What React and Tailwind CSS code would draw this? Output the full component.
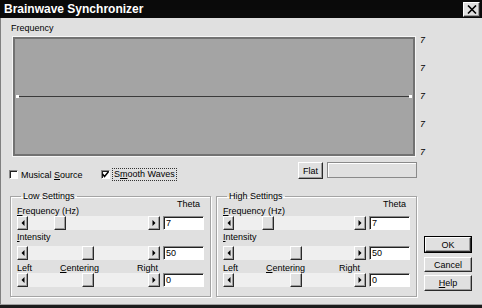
import React from "react";

const btn =
  "border border-t-[#ffffff] border-l-[#ffffff] border-r-[#2a2a2a] border-b-[#2a2a2a] shadow-[inset_-1px_-1px_0_#9c9c9c] bg-[#e0e0e0]";
const sunken =
  "border border-t-[#8a8a8a] border-l-[#8a8a8a] border-r-[#ffffff] border-b-[#ffffff] shadow-[inset_1px_1px_0_#222222]";

function LeftArrow() {
  return (
    <svg width="4" height="6" viewBox="0 0 4 6">
      <polygon points="3.5,0 0.5,3 3.5,6" fill="#000" />
    </svg>
  );
}
function RightArrow() {
  return (
    <svg width="4" height="6" viewBox="0 0 4 6">
      <polygon points="0.5,0 3.5,3 0.5,6" fill="#000" />
    </svg>
  );
}

function Slider({ spacer }) {
  return (
    <div className="flex h-[14px] w-[143px]">
      <div className={btn + " w-[11px] h-full flex items-center justify-center"}>
        <LeftArrow />
      </div>
      <div className="flex-1 flex bg-[#efefef]">
        <div className={spacer} />
        <div className={btn + " w-[12px] h-full shrink-0"} />
      </div>
      <div className={btn + " w-[12px] h-full flex items-center justify-center"}>
        <RightArrow />
      </div>
    </div>
  );
}

function Field({ value }) {
  return (
    <div className={sunken + " w-[41px] h-[14px] bg-white text-[9px] leading-[12px] pl-[2px] text-black"}>
      {value}
    </div>
  );
}

function Group({ title, values, spacers, rightLabelW }) {
  return (
    <fieldset className="w-[201px] border border-[#a4a4a4] shadow-[1px_1px_0_#ffffff,inset_1px_1px_0_#ffffff] px-[6px] pb-[9px]">
      <legend className="ml-[4px] px-[2px] text-[9px] leading-[10px]">{title}</legend>
      <div className="flex justify-between h-[17px] -mt-[2px] pr-[4px]">
        <span className="self-end leading-[10px]">
          <u>F</u>requency (Hz)
        </span>
        <span className="self-start leading-[10px]">Theta</span>
      </div>
      <div className="flex gap-[3px]">
        <Slider spacer={spacers[0]} />
        <Field value={values[0]} />
      </div>
      <div className="h-[16px] pt-[2px] leading-[10px]">
        <u>I</u>ntensity
      </div>
      <div className="flex gap-[3px]">
        <Slider spacer={spacers[1]} />
        <Field value={values[1]} />
      </div>
      <div className="h-[13px] pt-[3px] leading-[10px] flex">
        <span className="w-[43px]">Left</span>
        <span className={rightLabelW}>
          <u>C</u>entering
        </span>
        <span>Right</span>
      </div>
      <div className="flex gap-[3px]">
        <Slider spacer={spacers[1]} />
        <Field value={values[2]} />
      </div>
    </fieldset>
  );
}

export default function App() {
  return (
    <div
      className="w-[482px] h-[308px] bg-[#e0e0e0] flex flex-col text-[9px] text-black overflow-hidden shadow-[inset_1px_0_0_#808080]"
      style={{ fontFamily: '"Liberation Sans", Arial, sans-serif' }}
    >
      {/* Title bar */}
      <div className="h-[18px] bg-[#0a0a0a] flex items-center shrink-0">
        <span className="pl-[4px] text-white font-bold text-[12px] leading-[14px]">
          Brainwave Synchronizer
        </span>
        <div className={btn + " ml-auto mr-[2px] w-[17px] h-[15px] flex items-center justify-center"}>
          <svg width="10" height="9" viewBox="0 0 10 9">
            <path d="M1 0.5 L9 8.5 M9 0.5 L1 8.5" stroke="#000" strokeWidth="1.6" />
          </svg>
        </div>
      </div>

      {/* Frequency label */}
      <div className="h-[18px] pl-[11px] pt-[5px] leading-[10px] shrink-0">Frequency</div>

      {/* Graph row */}
      <div className="flex ml-[12px] shrink-0">
        <div className="w-[404px] h-[121px] border border-[#f6f6f6]">
          <div className="w-full h-full border-2 border-[#727272] bg-[#a4a4a4] flex items-center px-[1px]">
            <div className="flex items-center w-full">
              <div className="w-[3px] h-[3px] bg-white shrink-0" />
              <div className="flex-1 h-[1px] bg-[#3a3a3a]" />
              <div className="w-[3px] h-[3px] bg-white shrink-0" />
            </div>
          </div>
        </div>
        <div className="ml-[4px] -mt-[1px] h-[122px] flex flex-col justify-between leading-[10px] italic">
          <span>7</span>
          <span>7</span>
          <span>7</span>
          <span>7</span>
          <span>7</span>
        </div>
      </div>

      {/* Checkbox row */}
      <div className="flex items-start h-[17px] mt-[5px] pl-[9px] shrink-0">
        <div className="w-[92px] flex items-center h-[13px] mt-[6px]">
          <div className={sunken + " w-[9px] h-[9px] bg-white"} />
          <span className="ml-[3px] leading-[10px]">
            Musical <u>S</u>ource
          </span>
        </div>
        <div className="w-[197px] flex items-center h-[13px] mt-[6px]">
          <div className={sunken + " w-[9px] h-[9px] bg-white flex items-center justify-center"}>
            <svg width="7" height="7" viewBox="0 0 7 7">
              <path d="M0.5 3 L2.5 5.5 L6.5 0.8" stroke="#000" strokeWidth="1.5" fill="none" />
            </svg>
          </div>
          <span className="ml-[2px] px-[1px] h-[13px] leading-[11px] border border-dotted border-[#333]">
            S<u>m</u>ooth Waves
          </span>
        </div>
        <div className={btn + " w-[25px] h-[17px] flex items-center justify-center leading-[10px]"}>Flat</div>
        <div className="ml-[4px] w-[90px] h-[16px] border border-[#8a8a8a] shadow-[inset_1px_1px_0_#ffffff]" />
      </div>

      {/* Groups row */}
      <div className="flex mt-[12px] ml-[10px] shrink-0">
        <Group
          title="Low Settings"
          values={["7", "50", "0"]}
          spacers={["w-[26px] shrink-0", "w-[54px] shrink-0"]}
          rightLabelW="w-[77px]"
        />
        <div className="ml-[5px]">
          <Group
            title="High Settings"
            values={["7", "50", "0"]}
            spacers={["w-[28px] shrink-0", "w-[56px] shrink-0"]}
            rightLabelW="w-[73px]"
          />
        </div>
        <div className="ml-[7px] pt-[45px] flex flex-col w-[48px]">
          <div className="border border-black h-[17px]">
            <div className={btn + " w-full h-full flex items-center justify-center leading-[10px]"}>OK</div>
          </div>
          <div className={btn + " mt-[4px] h-[15px] flex items-center justify-center leading-[10px]"}>Cancel</div>
          <div className={btn + " mt-[3px] h-[16px] flex items-center justify-center leading-[10px]"}>
            <span>
              <u>H</u>elp
            </span>
          </div>
        </div>
      </div>

      <div className="mt-auto h-[1px] bg-[#a0a0a0] shrink-0" />
      <div className="h-[3px] bg-[#1c1c1c] shrink-0" />
    </div>
  );
}
